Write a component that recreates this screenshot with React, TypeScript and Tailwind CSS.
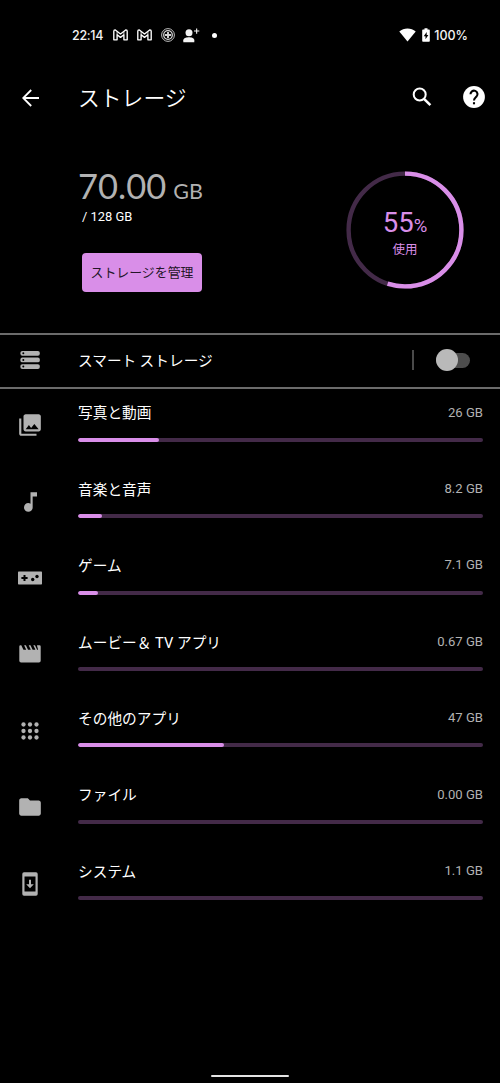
import type { ReactNode } from "react";
import { MdFolder, MdMusicNote, MdPhotoLibrary } from "react-icons/md";

const ICON = "w-[26px] h-[26px]";

function GmailIcon() {
  return (
    <svg viewBox="0 0 15 12" className="w-[15px] h-3" fill="none" stroke="#fff" strokeWidth="1.35" strokeLinejoin="round">
      <path d="M.8 2.2Q.8.8 2 .8L7.500 5 13 .8Q14.200.8 14.200 2.200V10.800H10.900V5.800L7.500 8.400 4.100 5.800V10.800H.8Z" />
      <path d="M4.100 5.800V2.600M10.900 5.800V2.600" strokeWidth=".8" />
    </svg>
  );
}

function TargetIcon() {
  return (
    <svg viewBox="0 0 14 14" className="w-3.5 h-3.5" fill="none" stroke="#d4d4d4">
      <circle cx="7" cy="7" r="6.400" strokeWidth=".9" />
      <circle cx="7" cy="7" r="4.300" strokeWidth="1.300" />
      <path d="M7 4V10M4 7H10" strokeWidth="1.900" />
    </svg>
  );
}

function PersonAddIcon() {
  return (
    <svg viewBox="0 0 17 15" className="w-[17px] h-[15px]" fill="#f4f4f4">
      <circle cx="6" cy="4.700" r="3.500" />
      <path d="M.3 14.300V12.300C.3 10 3.500 9.200 6 9.200S11.300 10 11.300 12.300V14.300Z" />
      <path d="M13.100.5H14.200V2.500H16.300V3.600H14.200V5.700H13.100V3.600H11V2.500H13.100Z" />
    </svg>
  );
}

function WifiIcon() {
  return (
    <svg viewBox="0 0 17 14" className="w-[17px] h-[14px]" fill="#fff">
      <path d="M8.500 13.600L.3 3.400C2.600 1.500 5.400.5 8.500.5S14.400 1.500 16.700 3.400Z" />
    </svg>
  );
}

function BatteryIcon() {
  return (
    <svg viewBox="0 0 8 14" className="w-2 h-3.5" fill="#fff">
      <path fillRule="evenodd" d="M2.500.2H5.500V1.500H7Q7.800 1.500 7.800 2.300V13Q7.800 13.800 7 13.800H1Q.2 13.800.2 13V2.300Q.2 1.500 1 1.500H2.500ZM4.700 4L1.700 8.300H3.500V11.300L6.400 7H4.700Z" />
    </svg>
  );
}

function BackIcon() {
  return (
    <svg viewBox="0 0 18 18" className="w-[18px] h-[18px]" fill="none" stroke="#fff" strokeWidth="1.800">
      <path d="M17 9H1.500M9.200 1L1.200 9L9.200 17" />
    </svg>
  );
}

function SearchIcon() {
  return (
    <svg viewBox="0 0 20 20" className="w-5 h-5" fill="none" stroke="#fff">
      <circle cx="7.700" cy="7.500" r="6" strokeWidth="2" />
      <path d="M12 11.800L18.400 18.200" strokeWidth="2.500" />
    </svg>
  );
}

function HelpIcon() {
  return (
    <svg viewBox="0 0 22 22" className="w-[22px] h-[22px]" fill="none">
      <circle cx="11" cy="11" r="10.900" fill="#fff" />
      <path d="M7.500 8.300A3.500 3.500 0 1 1 13.500 10.600C12.200 11.900 11 12.500 11 14.600" stroke="#000" strokeWidth="2.100" />
      <path d="M9.950 16.200H12.050V18.300H9.950Z" fill="#000" />
    </svg>
  );
}

function StorageIcon() {
  return (
    <svg viewBox="0 0 20 18" className="w-5 h-[18px]">
      {[0, 6.600, 13.200].map((y) => (
        <g key={y}>
          <rect x=".4" y={y} width="19.400" height="4.700" rx="1.900" fill="#b2b2b2" />
          <circle cx="3.300" cy={y + 2.350} r="1" fill="#000" />
        </g>
      ))}
    </svg>
  );
}

function GamepadIcon() {
  return (
    <svg viewBox="0 0 24 14" className="w-6 h-3.5">
      <rect y=".5" width="24" height="13" rx=".7" fill="#b2b2b2" />
      <path d="M5.500 3.900H7.500V6H9.600V8H7.500V10.100H5.500V8H3.400V6H5.500Z" fill="#000" />
      <circle cx="14.700" cy="8.500" r="1.700" fill="#000" />
      <circle cx="19" cy="5.500" r="1.700" fill="#000" />
    </svg>
  );
}

function MovieIcon() {
  return (
    <svg viewBox="0 0 22 18" className="w-[22px] h-[18px]" fill="#b2b2b2">
      <path d="M1.500.3H2.300L4.300 4.400Q4.500 4.700 5 4.700H6.700Q7.300 4.700 7 4.200L5.100.3H6.900L8.900 4.400Q9.100 4.700 9.600 4.700H11.300Q11.900 4.700 11.600 4.200L9.700.3H11.500L13.500 4.400Q13.700 4.700 14.200 4.700H15.900Q16.500 4.700 16.200 4.200L14.300.3H16L18 4.400Q18.200 4.700 18.600 4.700Q19.200 4.700 19 4.200L18 .8Q17.800.3 18.400.3H20.500Q21.700.3 21.700 1.500V15.800Q21.700 17.600 19.900 17.600H2.100Q.3 17.600.3 15.800V1.500Q.3.3 1.500.3Z" />
    </svg>
  );
}

function AppsIcon() {
  return (
    <svg viewBox="0 0 18 18" className="w-[18px] h-[18px]" fill="#b2b2b2">
      {[2.500, 9, 15.500].map((y) =>
        [2.500, 9, 15.500].map((x) => <circle key={`${x}-${y}`} cx={x} cy={y} r="2.150" />)
      )}
    </svg>
  );
}

function SystemIcon() {
  return (
    <svg viewBox="0 0 16 24" className="w-4 h-6" fill="#b2b2b2">
      <path fillRule="evenodd" d="M2 .2H14Q15.700.2 15.700 2V22Q15.700 23.800 14 23.800H2Q.3 23.800.3 22V2Q.3.2 2 .2ZM2.500 4.500V19.500H13.500V4.500Z" />
      <path d="M7 7.700H9V12.300H11.800L8 16.200 4.200 12.300H7Z" />
    </svg>
  );
}

type Category = {
  name: string;
  size: string;
  // filled length of the bar in percent
  percent: number;
  icon: ReactNode;
};

const categories: Category[] = [
  { name: "写真と動画", size: "26 GB", percent: 20, icon: <MdPhotoLibrary className={ICON} /> },
  { name: "音楽と音声", size: "8.2 GB", percent: 6, icon: <MdMusicNote className="ml-px h-[26px] w-[27px]" /> },
  { name: "ゲーム", size: "7.1 GB", percent: 5, icon: <GamepadIcon /> },
  { name: "ムービー＆ TV アプリ", size: "0.67 GB", percent: 0, icon: <MovieIcon /> },
  { name: "その他のアプリ", size: "47 GB", percent: 36, icon: <AppsIcon /> },
  { name: "ファイル", size: "0.00 GB", percent: 0, icon: <MdFolder className={ICON} /> },
  { name: "システム", size: "1.1 GB", percent: 0, icon: <SystemIcon /> },
];

function StatusBar() {
  return (
    <div className="flex h-[70px] items-center pl-[72px] pr-8 font-['Inter',sans-serif] text-[12.5px] font-medium text-[#f4f4f4]">
      <span className="w-[41px] whitespace-nowrap pt-0.5 tracking-[-0.3px]">22:14</span>
      <GmailIcon />
      <span className="ml-[9px]"><GmailIcon /></span>
      <span className="ml-[9px]"><TargetIcon /></span>
      <span className="ml-2"><PersonAddIcon /></span>
      <span className="ml-3 h-[5px] w-[5px] rounded-full bg-white" />
      <div className="ml-auto flex items-center">
        <WifiIcon />
        <span className="ml-1.5"><BatteryIcon /></span>
        <span className="ml-1 pt-0.5">100%</span>
      </div>
    </div>
  );
}

function Header() {
  return (
    <header className="flex h-[55px] items-center pl-[22px] pr-[15px]">
      <BackIcon />
      <h1 className="ml-[38px] pb-px text-[21.8px] font-[350] leading-none">ストレージ</h1>
      <div className="ml-auto flex items-center gap-[31px] pb-px">
        <SearchIcon />
        <HelpIcon />
      </div>
    </header>
  );
}

function UsageRing({ percent }: { percent: number }) {
  return (
    <div className="grid h-[118px] w-[118px] place-items-center text-[#d98ee8]">
      <svg viewBox="0 0 118 118" className="col-start-1 row-start-1 h-full w-full -rotate-90" fill="none" strokeWidth="4.400">
        <circle cx="59" cy="59" r="56.400" stroke="#432a48" />
        <circle cx="59" cy="59" r="56.400" stroke="#d98ee8" pathLength="100" strokeDasharray={`${percent} 100`} />
      </svg>
      <div className="col-start-1 row-start-1 flex flex-col items-center pt-1">
        <div className="font-['Roboto',sans-serif] text-[27.5px] leading-[29px]">
          55<span className="text-[18.5px]">%</span>
        </div>
        <div className="text-[12.5px] leading-[16px]">使用</div>
      </div>
    </div>
  );
}

function Summary() {
  return (
    <section className="flex h-[208px] justify-between pl-[78px] pr-9 pt-[46px]">
      <div>
        <div className="-mt-0.5 whitespace-nowrap font-['Lato',sans-serif] text-[34.5px] leading-[34px] text-[#b2b2b2]">
          70.00<span className="ml-[7px] text-[21.5px]">GB</span>
        </div>
        <div className="ml-1 font-['Roboto',sans-serif] text-[12.9px] leading-[18px]">/ 128 GB</div>
        <button className="ml-1 mt-[27px] block h-[39px] w-[120px] whitespace-nowrap rounded bg-[#d98ee8] pb-px text-[12.9px] text-[#241628]">
          ストレージを管理
        </button>
      </div>
      <UsageRing percent={55} />
    </section>
  );
}

function SmartStorage() {
  return (
    <div className="flex h-14 items-center border-y-2 border-[#6b6b6b] pb-[2px] pr-[29px]">
      <div className="flex w-[60px] shrink-0 justify-center"><StorageIcon /></div>
      <span className="ml-[18px] text-[14.7px]">スマート ストレージ</span>
      <span className="ml-auto h-5 w-0.5 bg-[#4a4a4a]" />
      <div className="ml-[22px] flex h-[22px] w-[35px] items-center">
        <span className="h-[22px] w-[22px] shrink-0 rounded-full bg-[#b9b9b9]" />
        <span className="-ml-[22px] -z-10 h-[15px] w-[34px] shrink-0 rounded-full bg-[#4d4d4d]" />
      </div>
    </div>
  );
}

function CategoryRow({ name, size, percent, icon }: Category) {
  return (
    <li className="flex h-[76.4px]">
      <div className="flex w-[60px] shrink-0 items-center justify-center text-[#b2b2b2]">{icon}</div>
      <div className="ml-[18px] mr-[17px] flex-1 pt-[14px]">
        <div className="flex h-[23px] items-center justify-between">
          <span className="pt-0.5 font-['Roboto','Noto_Sans_CJK_JP',sans-serif] text-[14.7px]">{name}</span>
          <span className="font-['Roboto',sans-serif] text-[13.1px] text-[#b2b2b2]">{size}</span>
        </div>
        <div className="mt-[13.8px] h-1 overflow-hidden rounded-full bg-[#432a48]">
          <div className="h-full rounded-full bg-[#d98ee8]" style={{ width: `${percent}%` }} />
        </div>
      </div>
    </li>
  );
}

export default function App() {
  return (
    <div className="isolate flex h-[1083px] w-[500px] flex-col overflow-hidden bg-black font-['Noto_Sans_CJK_JP',sans-serif] text-white">
      <StatusBar />
      <Header />
      <Summary />
      <SmartStorage />
      <ul className="-mt-[2px]">
        {categories.map((category) => (
          <CategoryRow key={category.name} {...category} />
        ))}
      </ul>
      <div className="mx-auto mb-[6px] mt-auto h-0.5 w-[78px] rounded-full bg-[#e4e4e4]" />
    </div>
  );
}
